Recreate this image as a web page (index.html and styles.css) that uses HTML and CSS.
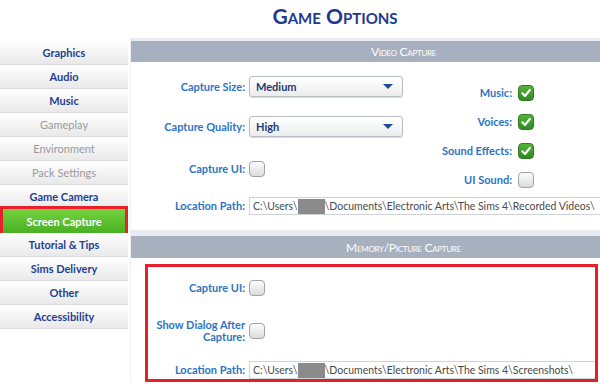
FILE: index.html
```html
<!DOCTYPE html>
<html lang="en">
<head>
  <meta charset="UTF-8">
  <meta name="viewport" content="width=device-width, initial-scale=1.0">
  <title>Game Options</title>
  <link rel="stylesheet" href="styles.css">
</head>
<body>
  <header class="title-bar">
    <h1>Game Options</h1>
  </header>

  <div class="layout">
    <nav class="sidebar">
      <a class="nav-item">Graphics</a>
      <a class="nav-item">Audio</a>
      <a class="nav-item">Music</a>
      <a class="nav-item disabled">Gameplay</a>
      <a class="nav-item disabled">Environment</a>
      <a class="nav-item disabled">Pack Settings</a>
      <a class="nav-item">Game Camera</a>
      <a class="nav-item active">Screen Capture</a>
      <a class="nav-item">Tutorial &amp; Tips</a>
      <a class="nav-item">Sims Delivery</a>
      <a class="nav-item">Other</a>
      <a class="nav-item">Accessibility</a>
    </nav>

    <main class="panel">
      <!-- Video capture -->
      <div class="section-head">Video Capture</div>
      <div class="video-body">
        <div class="cols">
          <div class="col-left">
            <div class="row row-size">
              <span class="label">Capture Size:</span>
              <div class="select"><span>Medium</span><i class="arrow"></i></div>
            </div>
            <div class="row row-quality">
              <span class="label">Capture Quality:</span>
              <div class="select"><span>High</span><i class="arrow"></i></div>
            </div>
            <div class="row row-ui">
              <span class="label">Capture UI:</span>
              <span class="check"></span>
            </div>
          </div>
          <div class="col-right">
            <div class="row">
              <span class="label">Music:</span>
              <span class="check on"><svg viewBox="0 0 16 16"><path d="M3.8 8.4 L6.8 11.4 L12.4 4.6"/></svg></span>
            </div>
            <div class="row">
              <span class="label">Voices:</span>
              <span class="check on"><svg viewBox="0 0 16 16"><path d="M3.8 8.4 L6.8 11.4 L12.4 4.6"/></svg></span>
            </div>
            <div class="row">
              <span class="label">Sound Effects:</span>
              <span class="check on"><svg viewBox="0 0 16 16"><path d="M3.8 8.4 L6.8 11.4 L12.4 4.6"/></svg></span>
            </div>
            <div class="row">
              <span class="label">UI Sound:</span>
              <span class="check"></span>
            </div>
          </div>
        </div>
        <div class="row path-row">
          <span class="label">Location Path:</span>
          <div class="path">C:\Users\<span class="blur"></span>\Documents\Electronic Arts\The Sims 4\Recorded Videos\</div>
        </div>
      </div>

      <!-- Memory / picture capture -->
      <div class="section-gap"></div>
      <div class="section-head memory-head">Memory/Picture Capture</div>
      <div class="memory-body">
        <div class="highlight">
          <div class="row">
            <span class="label">Capture UI:</span>
            <span class="check"></span>
          </div>
          <div class="row row-dialog">
            <span class="label">Show Dialog After<br>Capture:</span>
            <span class="check"></span>
          </div>
          <div class="row path-row">
            <span class="label">Location Path:</span>
            <div class="path">C:\Users\<span class="blur"></span>\Documents\Electronic Arts\The Sims 4\Screenshots\</div>
          </div>
        </div>
      </div>
    </main>
  </div>
</body>
</html>
```

FILE: styles.css
```css
/* Base */
body {
  margin: 0;
  width: 600px;
  height: 384px;
  overflow: hidden;
  background: #ffffff;
  font-family: Lato, "Open Sans", sans-serif;
}

.title-bar {
  height: 38px;
  box-sizing: border-box;
  display: flex;
  justify-content: center;
  align-items: center;
  padding: 0 0 8px 70px;
}

.title-bar h1 {
  margin: 0;
  font-size: 21px;
  font-weight: 700;
  font-variant: small-caps;
  color: #1c3b8c;
}

.layout {
  display: flex;
}

/* Sidebar */
.sidebar {
  width: 128px;
  margin-top: 3px;
  display: flex;
  flex-direction: column;
  flex-shrink: 0;
}

.nav-item {
  height: 24px;
  box-sizing: border-box;
  display: flex;
  align-items: center;
  justify-content: center;
  font-size: 11px;
  font-weight: 700;
  color: #1f3f94;
  background: linear-gradient(#ffffff, #e9e9e9);
  border-bottom: 1px solid #dcdcdc;
}

.nav-item.disabled {
  color: #9a9a9a;
  font-weight: 400;
}

.nav-item.active {
  margin: 0 3px;
  color: #ffffff;
  background: linear-gradient(#74d43e, #49b023);
  border-bottom: none;
  outline: 3px solid #e5202b;
}

/* Main panel */
.panel {
  flex: 1;
  margin-left: 2px;
  border-top: 3px solid #e8ecf2;
  border-left: 1px solid #eef0f4;
}

.section-head {
  height: 21px;
  display: flex;
  align-items: center;
  justify-content: center;
  padding-left: 76px;
  background: #a6b0be;
  color: #ffffff;
  font-size: 12px;
  letter-spacing: -0.3px;
  font-variant: small-caps;
}

.memory-head {
  height: 22px;
}

.section-gap {
  height: 6px;
  margin-top: 2px;
  background: #e9edf3;
}

.row {
  display: flex;
  align-items: center;
}

.label {
  text-align: right;
  font-size: 11px;
  font-weight: 700;
  color: #2d74c4;
  margin-right: 4px;
  line-height: 12px;
}

/* Video body */
.video-body {
  height: 166px;
}

.cols {
  display: flex;
}

.col-left {
  width: 279px;
  display: flex;
  flex-direction: column;
  padding-top: 14px;
}

.col-left .label {
  width: 114px;
}

.row-quality {
  margin-top: 19px;
}

.row-ui {
  margin-top: 24px;
}

.col-right {
  display: flex;
  flex-direction: column;
  gap: 13px;
  padding-top: 23px;
}

.col-right .label {
  width: 102px;
  margin-right: 6px;
}

.select {
  width: 154px;
  height: 21px;
  box-sizing: border-box;
  border: 1px solid #b9bec6;
  border-radius: 3px;
  background: linear-gradient(#ffffff, #ececec);
  box-shadow: 0 1px 1px rgba(0, 0, 0, 0.15);
  display: flex;
  align-items: center;
  justify-content: space-between;
  padding: 0 9px 0 6px;
  font-size: 11px;
  font-weight: 700;
  color: #1d3978;
}

.arrow {
  width: 0;
  height: 0;
  border-left: 5px solid transparent;
  border-right: 5px solid transparent;
  border-top: 5px solid #1f4a9a;
}

.check {
  width: 16px;
  height: 16px;
  box-sizing: border-box;
  border: 1px solid #9ea3aa;
  border-radius: 4px;
  background: linear-gradient(#fdfdfd, #dcdcdc);
  display: inline-flex;
  align-items: center;
  justify-content: center;
}

.check.on {
  border-color: #2f7a22;
  background: linear-gradient(#56b23a, #2f8a24);
}

.check svg {
  width: 14px;
  height: 14px;
  fill: none;
  stroke: #ffffff;
  stroke-width: 2.4;
  stroke-linecap: round;
  stroke-linejoin: round;
}

.path-row {
  margin-top: 9px;
}

.video-body .path-row .label {
  width: 114px;
}

.path {
  flex: 1;
  height: 18px;
  box-sizing: border-box;
  border: 1px solid #cfd2d6;
  border-right: none;
  display: flex;
  align-items: center;
  padding-left: 3px;
  font-size: 10.5px;
  color: #4a4a4a;
  white-space: nowrap;
  overflow: hidden;
}

.blur {
  display: inline-block;
  width: 27px;
  height: 15px;
  background: #8b8b8b;
}

/* Memory body */
.memory-body {
  padding: 6px 2px 0 14px;
}

.highlight {
  box-sizing: border-box;
  border: 3px solid #e5202b;
  height: 118px;
  padding-top: 13px;
}

.highlight .label {
  width: 97px;
}

.row-dialog {
  margin-top: 23px;
}

.highlight .path-row {
  margin-top: 18px;
}
```
